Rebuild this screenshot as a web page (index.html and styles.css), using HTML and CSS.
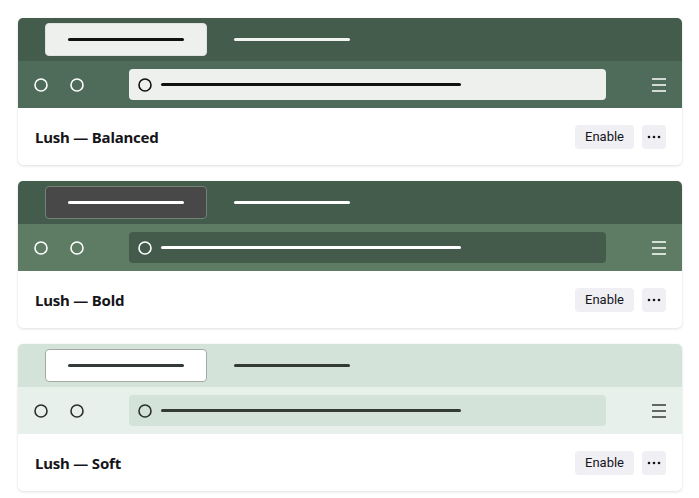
FILE: index.html
```html
<!DOCTYPE html>
<html>
<head>
<meta charset="utf-8">
<link rel="stylesheet" href="styles.css">
</head>
<body>
<div class="list">
  <div class="card theme-balanced">
    <div class="tabstrip">
      <div class="tab active"><span class="line"></span></div>
      <div class="tab"><span class="line"></span></div>
    </div>
    <div class="toolbar">
      <svg class="ring" viewBox="0 0 14 14"><circle cx="7" cy="7" r="6"/></svg>
      <svg class="ring" viewBox="0 0 14 14"><circle cx="7" cy="7" r="6"/></svg>
      <div class="url">
        <svg class="ring" viewBox="0 0 14 14"><circle cx="7" cy="7" r="6"/></svg>
        <span class="line"></span>
      </div>
      <svg class="menu" viewBox="0 0 14 14"><path d="M0 1H14M0 7H14M0 13H14"/></svg>
    </div>
    <div class="footer">
      <span class="title">Lush — Balanced</span>
      <div class="actions">
        <button class="btn">Enable</button>
        <button class="btn more"><svg viewBox="0 0 14 4"><circle cx="2" cy="2" r="1.3"/><circle cx="7" cy="2" r="1.3"/><circle cx="12" cy="2" r="1.3"/></svg></button>
      </div>
    </div>
  </div>

  <div class="card theme-bold">
    <div class="tabstrip">
      <div class="tab active"><span class="line"></span></div>
      <div class="tab"><span class="line"></span></div>
    </div>
    <div class="toolbar">
      <svg class="ring" viewBox="0 0 14 14"><circle cx="7" cy="7" r="6"/></svg>
      <svg class="ring" viewBox="0 0 14 14"><circle cx="7" cy="7" r="6"/></svg>
      <div class="url">
        <svg class="ring" viewBox="0 0 14 14"><circle cx="7" cy="7" r="6"/></svg>
        <span class="line"></span>
      </div>
      <svg class="menu" viewBox="0 0 14 14"><path d="M0 1H14M0 7H14M0 13H14"/></svg>
    </div>
    <div class="footer">
      <span class="title">Lush — Bold</span>
      <div class="actions">
        <button class="btn">Enable</button>
        <button class="btn more"><svg viewBox="0 0 14 4"><circle cx="2" cy="2" r="1.3"/><circle cx="7" cy="2" r="1.3"/><circle cx="12" cy="2" r="1.3"/></svg></button>
      </div>
    </div>
  </div>

  <div class="card theme-soft">
    <div class="tabstrip">
      <div class="tab active"><span class="line"></span></div>
      <div class="tab"><span class="line"></span></div>
    </div>
    <div class="toolbar">
      <svg class="ring" viewBox="0 0 14 14"><circle cx="7" cy="7" r="6"/></svg>
      <svg class="ring" viewBox="0 0 14 14"><circle cx="7" cy="7" r="6"/></svg>
      <div class="url">
        <svg class="ring" viewBox="0 0 14 14"><circle cx="7" cy="7" r="6"/></svg>
        <span class="line"></span>
      </div>
      <svg class="menu" viewBox="0 0 14 14"><path d="M0 1H14M0 7H14M0 13H14"/></svg>
    </div>
    <div class="footer">
      <span class="title">Lush — Soft</span>
      <div class="actions">
        <button class="btn">Enable</button>
        <button class="btn more"><svg viewBox="0 0 14 4"><circle cx="2" cy="2" r="1.3"/><circle cx="7" cy="2" r="1.3"/><circle cx="12" cy="2" r="1.3"/></svg></button>
      </div>
    </div>
  </div>
</div>
</body>
</html>
```

FILE: styles.css
```css
* { box-sizing: border-box; }

body {
  margin: 0;
  background: #ffffff;
  font-family: Roboto, "Noto Sans", sans-serif;
  color: #15141a;
}

.list {
  display: flex;
  flex-direction: column;
  gap: 16px;
  padding: 18px 17px 18px 18px;
}

.card {
  background: #ffffff;
  border-radius: 5px;
  overflow: hidden;
  box-shadow: 0 1px 3px rgba(0, 0, 0, 0.12), 0 0 1px rgba(0, 0, 0, 0.06);
}

.tabstrip {
  height: 43px;
  display: flex;
  align-items: flex-start;
  gap: 4px;
  padding: 5px 0 0 27px;
}

.tab {
  width: 162px;
  height: 33px;
  border-radius: 4px;
  border: 1px solid transparent;
  display: flex;
  align-items: center;
  padding: 0 22px;
}

.line {
  display: block;
  height: 3px;
  border-radius: 2px;
}

.tab .line { width: 118px; height: 3.5px; }

.toolbar {
  height: 47px;
  display: flex;
  align-items: center;
  padding: 0 16px;
}

.ring {
  width: 14px;
  height: 14px;
  flex: none;
  fill: none;
  stroke-width: 1.6;
}

.toolbar > .ring + .ring { margin-left: 22px; }

.url {
  flex: 1;
  height: 31px;
  margin: 0 46px 0 45px;
  border-radius: 4px;
  display: flex;
  align-items: center;
  padding-left: 9px;
  gap: 9px;
}

.url .line { width: 300px; height: 3.5px; }

.menu {
  width: 14px;
  height: 14px;
  flex: none;
  fill: none;
  stroke-width: 1.5;
}

.footer {
  height: 57px;
  display: flex;
  align-items: center;
  justify-content: space-between;
  padding: 0 16px 0 17px;
}

.title {
  font-family: "Noto Sans", Roboto, sans-serif;
  font-size: 15px;
  font-weight: 700;
  letter-spacing: -0.2px;
}

.actions {
  display: flex;
  gap: 8px;
}

.btn {
  height: 24px;
  border: none;
  border-radius: 4px;
  background: #f0f0f4;
  color: #15141a;
  font-family: Roboto, "Noto Sans", sans-serif;
  font-size: 13px;
  padding: 0 10px;
  display: flex;
  align-items: center;
  justify-content: center;
}

.btn.more {
  width: 24px;
  padding: 0;
}

.btn.more svg {
  width: 14px;
  height: 4px;
  fill: #15141a;
}

/* Balanced */
.theme-balanced .tabstrip { background: #445c4c; }
.theme-balanced .toolbar { background: #4f6b5a; }
.theme-balanced .tab.active { background: #eef0ed; border-color: #dfe3df; }
.theme-balanced .tab.active .line { background: #111111; }
.theme-balanced .tab .line { background: #f2f4f2; }
.theme-balanced .toolbar > .ring { stroke: #ffffff; }
.theme-balanced .url { background: #eef0ed; }
.theme-balanced .url .ring { stroke: #111111; }
.theme-balanced .url .line { background: #111111; }
.theme-balanced .menu { stroke: #ffffff; }

/* Bold */
.theme-bold .tabstrip { background: #445c4c; }
.theme-bold .toolbar { background: #5e7c64; }
.theme-bold .tab.active { background: #474847; border-color: #718277; }
.theme-bold .tab .line { background: #ffffff; }
.theme-bold .toolbar > .ring { stroke: #ffffff; }
.theme-bold .url { background: #445a4a; }
.theme-bold .url .ring { stroke: #ffffff; }
.theme-bold .url .line { background: #ffffff; }
.theme-bold .menu { stroke: #ffffff; }

/* Soft */
.theme-soft .tabstrip { background: #d3e3d9; }
.theme-soft .toolbar { background: #e8f0eb; }
.theme-soft .tab.active { background: #ffffff; border-color: #a3aaa5; }
.theme-soft .tab .line { background: #343b37; }
.theme-soft .toolbar > .ring { stroke: #2b2f2d; }
.theme-soft .url { background: #d3e3d9; }
.theme-soft .url .ring { stroke: #2b2f2d; }
.theme-soft .url .line { background: #343b37; }
.theme-soft .menu { stroke: #343b37; }
```
